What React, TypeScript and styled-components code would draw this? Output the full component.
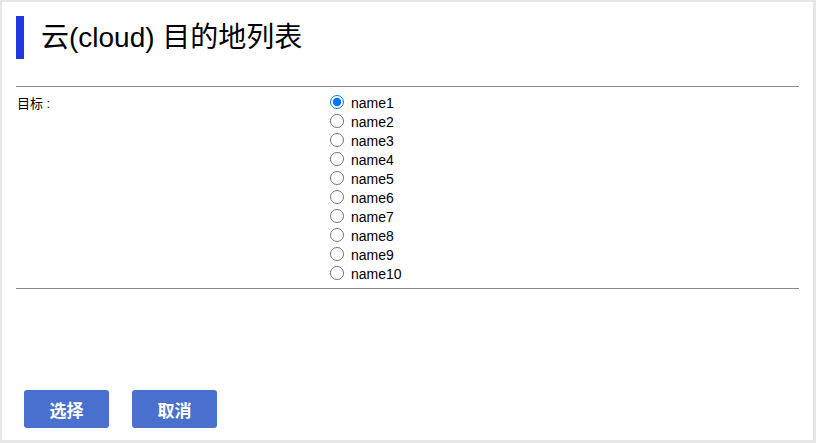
import React, { useState } from "react";
import styled, { createGlobalStyle } from "styled-components";

const GlobalStyle = createGlobalStyle`
  html, body {
    margin: 0;
    padding: 0;
    background: #e6e6e6;
  }
  body {
    font-family: "Liberation Sans", Arial, "Noto Sans CJK SC", sans-serif;
    color: #000;
  }
  #root {
    padding: 2px 3px 3px 2px;
  }
`;

const Card = styled.div`
  box-sizing: border-box;
  width: 811px;
  height: 438px;
  background: #fff;
  padding: 14px 14px 12px 14px;
  display: flex;
  flex-direction: column;
`;

const Header = styled.div`
  display: flex;
  align-items: center;
  height: 43px;
  gap: 17px;
`;

const Bar = styled.div`
  width: 8px;
  height: 43px;
  background: #1f36e0;
`;

const Title = styled.h1`
  margin: 0;
  font-size: 28px;
  font-weight: normal;
  line-height: 43px;
  font-family: "Liberation Sans", Arial, "Noto Sans CJK SC", sans-serif;
`;

const Rule = styled.div`
  height: 1px;
  background: #8a8a8a;
`;

const TopRule = styled(Rule)`
  margin-top: 27px;
`;

const FormRow = styled.div`
  display: flex;
  padding: 6px 0 5px 0;
`;

const FieldLabel = styled.div`
  width: 313px;
  font-size: 13px;
  line-height: 19px;
  padding-left: 1px;
  padding-top: 1px;
  font-family: "Liberation Sans", Arial, "Noto Sans CJK SC", sans-serif;
`;

const Options = styled.div`
  display: flex;
  flex-direction: column;
`;

const Option = styled.label`
  display: flex;
  align-items: flex-start;
  height: 19px;
  font-size: 14px;
  line-height: 21px;
`;

const Radio = styled.input`
  margin: 2px 7px 0 0;
  width: 14px;
  height: 14px;
`;

const Actions = styled.div`
  margin-top: auto;
  display: flex;
  gap: 23px;
  padding-left: 8px;
`;

const Button = styled.button`
  width: 85px;
  height: 38px;
  border: none;
  border-radius: 3px;
  background: #4a70cf;
  color: #fff;
  font-size: 17px;
  font-weight: bold;
  font-family: "Noto Sans CJK SC", sans-serif;
  cursor: pointer;
`;

const names = Array.from({ length: 10 }, (_, i) => `name${i + 1}`);

export default function App() {
  const [selected, setSelected] = useState("name1");
  return (
    <>
      <GlobalStyle />
      <Card>
        <Header>
          <Bar />
          <Title>云(cloud) 目的地列表</Title>
        </Header>
        <TopRule />
        <FormRow>
          <FieldLabel>目标 :</FieldLabel>
          <Options>
            {names.map((n) => (
              <Option key={n}>
                <Radio
                  type="radio"
                  name="target"
                  value={n}
                  checked={selected === n}
                  onChange={() => setSelected(n)}
                />
                {n}
              </Option>
            ))}
          </Options>
        </FormRow>
        <Rule />
        <Actions>
          <Button>选择</Button>
          <Button>取消</Button>
        </Actions>
      </Card>
    </>
  );
}
